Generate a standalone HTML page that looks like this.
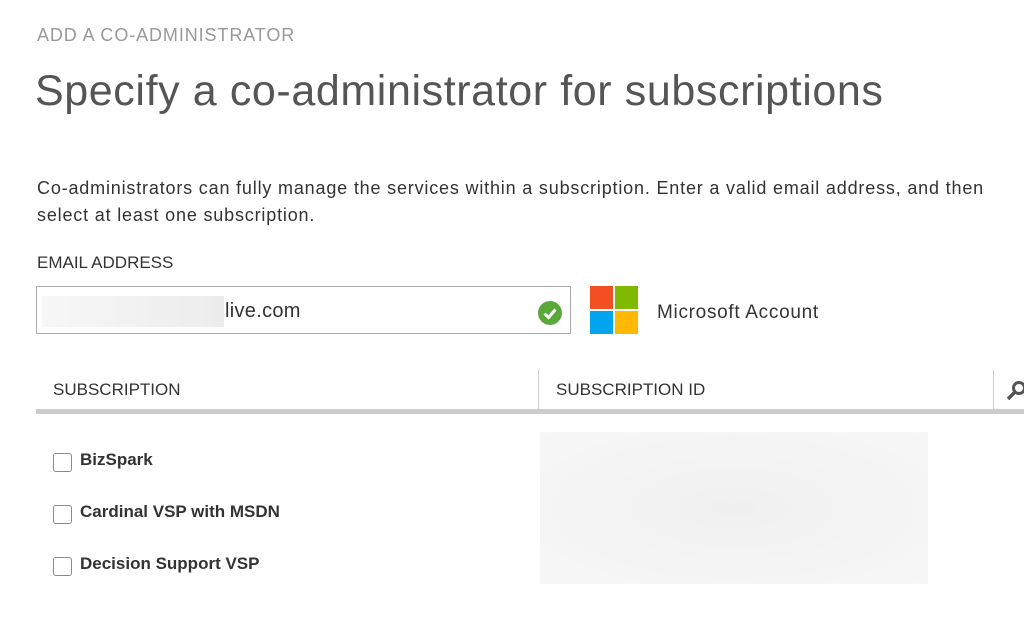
<!DOCTYPE html>
<html><head><style>
body{margin:0;width:1024px;height:631px;background:#fff;font-family:"Liberation Sans",sans-serif;color:#333;position:relative;overflow:hidden}
.a{position:absolute;white-space:nowrap}
.cb{position:absolute;left:53px;width:17px;height:17px;border:1px solid #8a8a8a;border-radius:3px;background:#fff}
.lbl{position:absolute;left:80px;font-size:17px;font-weight:bold;color:#333}
</style></head><body>
<div class="a" style="left:37px;top:25px;font-size:18px;color:#999;letter-spacing:0.9px">ADD A CO-ADMINISTRATOR</div>
<div class="a" style="left:35px;top:67px;font-size:43px;color:#555;font-weight:300;letter-spacing:0.6px">Specify a co-administrator for subscriptions</div>
<div class="a" style="left:37px;top:175px;font-size:18px;line-height:27px;color:#333;white-space:normal;width:975px;letter-spacing:0.82px">Co-administrators can fully manage the services within a subscription. Enter a valid email address, and then select at least one subscription.</div>
<div class="a" style="left:37px;top:253px;font-size:17px;color:#333">EMAIL ADDRESS</div>
<div class="a" style="left:36px;top:286px;width:535px;height:48px;border:1px solid #aaa;box-sizing:border-box"></div>
<div class="a" style="left:42px;top:296px;width:182px;height:31px;background:linear-gradient(90deg,#f7f7f7,#ececec)"></div>
<div class="a" style="left:225px;top:300px;font-size:20px;color:#333;letter-spacing:0.3px">live.com</div>
<div class="a" style="left:538px;top:301px;width:24px;height:24px;border-radius:50%;background:#5aa83a"></div>
<svg class="a" style="left:538px;top:301px" width="24" height="24"><path d="M6.5 12.5l4 4 7-8" stroke="#fff" stroke-width="3" fill="none"/></svg>
<div class="a" style="left:590px;top:286px;width:23px;height:23px;background:#f25022"></div>
<div class="a" style="left:615px;top:286px;width:23px;height:23px;background:#7fba00"></div>
<div class="a" style="left:590px;top:311px;width:23px;height:23px;background:#00a4ef"></div>
<div class="a" style="left:615px;top:311px;width:23px;height:23px;background:#ffb900"></div>
<div class="a" style="left:657px;top:302px;font-size:19px;color:#333;letter-spacing:0.7px">Microsoft Account</div>
<div class="a" style="left:53px;top:380px;font-size:17px;color:#333">SUBSCRIPTION</div>
<div class="a" style="left:556px;top:380px;font-size:17px;color:#333">SUBSCRIPTION ID</div>
<div class="a" style="left:538px;top:370px;width:1px;height:40px;background:#ccc"></div>
<div class="a" style="left:993px;top:370px;width:1px;height:40px;background:#ccc"></div>
<svg class="a" style="left:1005px;top:380px" width="19" height="22"><circle cx="14" cy="8" r="5.5" stroke="#555" stroke-width="3" fill="none"/><path d="M10 12l-7 7" stroke="#555" stroke-width="3.5"/></svg>
<div class="a" style="left:36px;top:409px;width:988px;height:5px;background:#ccc"></div>
<div class="a" style="left:540px;top:432px;width:388px;height:152px;background:radial-gradient(ellipse at center,#f0f0f0,#f7f7f7)"></div>
<div class="cb" style="top:453px"></div><div class="lbl" style="top:450px">BizSpark</div>
<div class="cb" style="top:505px"></div><div class="lbl" style="top:502px">Cardinal VSP with MSDN</div>
<div class="cb" style="top:557px"></div><div class="lbl" style="top:554px">Decision Support VSP</div>
</body></html>
